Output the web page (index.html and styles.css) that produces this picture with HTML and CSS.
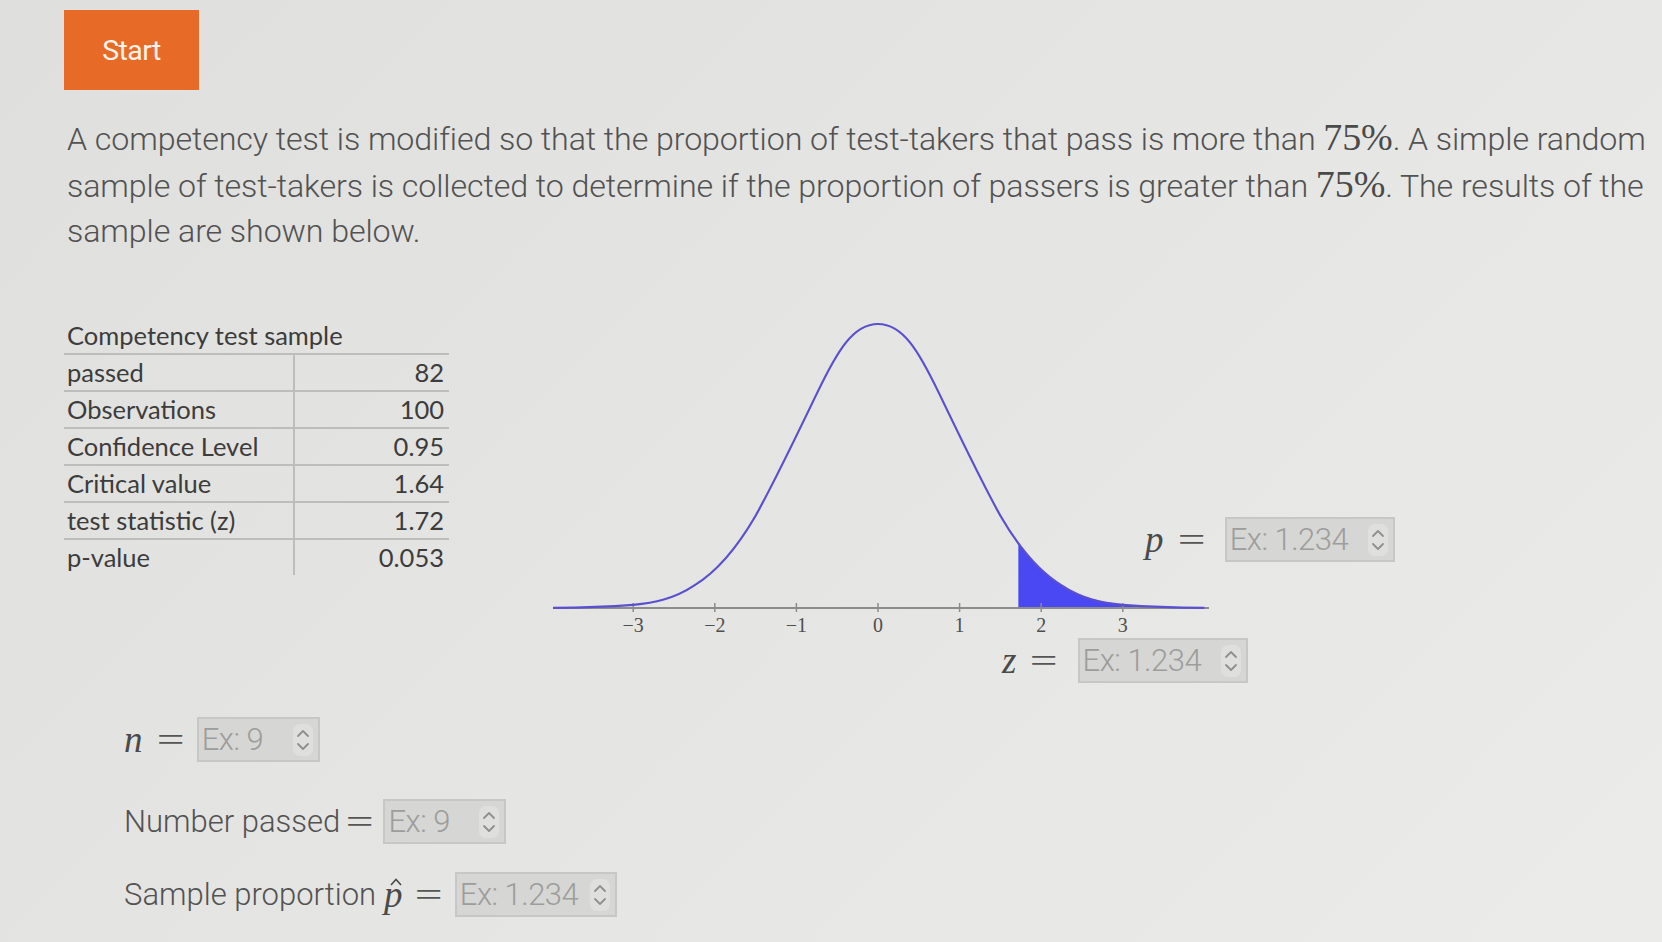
FILE: index.html
```html
<!DOCTYPE html>
<html lang="en">
<head>
<meta charset="utf-8">
<title>Competency test</title>
<link rel="stylesheet" href="styles.css">
</head>
<body>
<div class="page">
  <button class="start">Start</button>

  <p class="problem">A competency test is modified so that the proportion of test-takers that pass is more than <span class="num">75%</span>. A simple random<br>sample of test-takers is collected to determine if the proportion of passers is greater than <span class="num">75%</span>. The results of the<br>sample are shown below.</p>

  <div class="mid">
    <div class="table-block">
      <div class="table-title">Competency test sample</div>
      <table class="data">
        <tr><td class="k">passed</td><td class="v">82</td></tr>
        <tr><td class="k">Observations</td><td class="v">100</td></tr>
        <tr><td class="k">Confidence Level</td><td class="v">0.95</td></tr>
        <tr><td class="k">Critical value</td><td class="v">1.64</td></tr>
        <tr><td class="k">test statistic (z)</td><td class="v">1.72</td></tr>
        <tr><td class="k">p-value</td><td class="v">0.053</td></tr>
      </table>
    </div>

    <div class="chart">
      <svg class="curve" width="656" height="330" viewBox="0 0 656 330">
        <polygon class="tail" points="465.35,297 465.35,232.3 467.8,235.57 478,247.6 488.2,258.57 498.4,267.2 508.6,274.39 518.8,280 529,284.53 539.2,288 549.4,290.52 569.8,293.85 590.2,295.55 610.6,296.38 631,296.75 651.4,296.9 651.4,297"/>
        <line class="axis" x1="0" y1="297" x2="656" y2="297"/>
        <g class="ticks">
          <line x1="80.2" y1="292" x2="80.2" y2="301"/>
          <line x1="161.8" y1="292" x2="161.8" y2="301"/>
          <line x1="243.4" y1="292" x2="243.4" y2="301"/>
          <line x1="325" y1="292" x2="325" y2="301"/>
          <line x1="406.6" y1="292" x2="406.6" y2="301"/>
          <line x1="488.2" y1="292" x2="488.2" y2="301"/>
          <line x1="569.8" y1="292" x2="569.8" y2="301"/>
        </g>
        <path class="line" d="M0,296.9 C40,296.6 60,295.4 80.2,293.85 C100.6,292 121,288 141.4,274.39 C161.8,262 182.2,240 202.6,204.79 C223,168 243.4,124.75 263.8,82.64 C284.2,40 300,13 325,13 C350,13 365.8,40 386.2,82.64 C406.6,124.75 427,168 447.4,204.79 C467.8,240 488.2,262 508.6,274.39 C529,288 549.4,292 569.8,293.85 C590,295.4 610,296.6 651.4,296.9"/>
        <g class="labels">
          <text x="80.2" y="321">−3</text>
          <text x="161.8" y="321">−2</text>
          <text x="243.4" y="321">−1</text>
          <text x="325" y="321">0</text>
          <text x="406.6" y="321">1</text>
          <text x="488.2" y="321">2</text>
          <text x="569.8" y="321">3</text>
        </g>
      </svg>

      <div class="field field-p">
        <span class="mi">p</span><span class="mo">=</span>
        <div class="box box-lg"><span class="ph">Ex: 1.234</span><svg class="spin" width="22" height="34" viewBox="0 0 22 34"><rect x="1" y="1" width="20" height="32" rx="7"/><path d="M6 13 L11 8 L16 13"/><path d="M6 21 L11 26 L16 21"/></svg></div>
      </div>

      <div class="field field-z">
        <span class="mi">z</span><span class="mo">=</span>
        <div class="box box-lg"><span class="ph">Ex: 1.234</span><svg class="spin" width="22" height="34" viewBox="0 0 22 34"><rect x="1" y="1" width="20" height="32" rx="7"/><path d="M6 13 L11 8 L16 13"/><path d="M6 21 L11 26 L16 21"/></svg></div>
      </div>
    </div>
  </div>

  <div class="field row-n">
    <span class="mi">n</span><span class="mo">=</span>
    <div class="box box-sm"><span class="ph">Ex: 9</span><svg class="spin" width="22" height="34" viewBox="0 0 22 34"><rect x="1" y="1" width="20" height="32" rx="7"/><path d="M6 13 L11 8 L16 13"/><path d="M6 21 L11 26 L16 21"/></svg></div>
  </div>

  <div class="field row-passed">
    <span class="txt">Number passed</span><span class="mo">=</span>
    <div class="box box-sm"><span class="ph">Ex: 9</span><svg class="spin" width="22" height="34" viewBox="0 0 22 34"><rect x="1" y="1" width="20" height="32" rx="7"/><path d="M6 13 L11 8 L16 13"/><path d="M6 21 L11 26 L16 21"/></svg></div>
  </div>

  <div class="field row-prop">
    <span class="txt">Sample proportion</span><span class="mi hat">p<svg class="caret" width="12" height="8" viewBox="0 0 12 8"><path d="M1 7 L6 1.5 L11 7"/></svg></span><span class="mo">=</span>
    <div class="box box-md"><span class="ph">Ex: 1.234</span><svg class="spin" width="22" height="34" viewBox="0 0 22 34"><rect x="1" y="1" width="20" height="32" rx="7"/><path d="M6 13 L11 8 L16 13"/><path d="M6 21 L11 26 L16 21"/></svg></div>
  </div>
</div>
</body>
</html>
```

FILE: styles.css
```css
html, body {
  margin: 0;
  padding: 0;
}

body {
  width: 1662px;
  height: 942px;
  overflow: hidden;
  background: linear-gradient(135deg, #dfdfdd 0%, #e5e5e3 50%, #ebebe9 100%);
  font-family: Roboto, "Liberation Sans", sans-serif;
  font-weight: 300;
  color: #4f4f4f;
}

.page {
  padding: 10px 0 0 64px;
}

.start {
  display: block;
  width: 135px;
  height: 80px;
  margin: 0;
  padding: 0;
  border: none;
  background: #e76a27;
  color: #fff3ea;
  font-family: Roboto, "Liberation Sans", sans-serif;
  font-weight: 400;
  font-size: 28.5px;
  letter-spacing: -0.6px;
}

.problem {
  margin: 25px 0 0 3px;
  font-size: 32.2px;
  line-height: 45px;
  white-space: nowrap;
  color: #525252;
  letter-spacing: -0.1px;
}

.num {
  font-family: "Liberation Serif", serif;
  font-weight: 400;
  font-size: 38px;
  color: #4a4a4a;
}

.mid {
  display: flex;
  margin-top: 57px;
}

.table-block {
  width: 385px;
  margin-top: 7px;
  font-family: Lato, "Open Sans", sans-serif;
  font-weight: 400;
  color: #3c3c3c;
  font-size: 25.5px;
}

.table-title {
  height: 35px;
  line-height: 35px;
  padding-left: 3px;
}

.data {
  width: 385px;
  border-collapse: collapse;
  font-size: 25.5px;
}

.data td {
  height: 35px;
  padding: 0;
  border-top: 2px solid #bdbdbb;
  line-height: 35px;
}

.data td.k {
  width: 226px;
  padding-left: 3px;
  border-right: 2px solid #bdbdbb;
}

.data td.v {
  text-align: right;
  padding-right: 5px;
}

.chart {
  display: grid;
  grid-template-columns: 592px 64px auto;
  grid-template-rows: 330px 45px;
  margin-left: 104px;
}

.curve {
  grid-column: 1 / 3;
  grid-row: 1;
  display: block;
}

.curve .axis {
  stroke: #8c8c8c;
  stroke-width: 2;
}

.curve .ticks line {
  stroke: #8c8c8c;
  stroke-width: 1.5;
}

.curve .tail {
  fill: #4a48f2;
}

.curve .line {
  fill: none;
  stroke: #5a50cf;
  stroke-width: 2.2;
  stroke-linejoin: round;
}

.curve .labels text {
  font-family: "Liberation Serif", serif;
  font-size: 20px;
  fill: #4f4f4f;
  text-anchor: middle;
}

.field {
  display: flex;
  align-items: center;
}

.field-p {
  grid-column: 2 / 4;
  grid-row: 1;
  align-self: end;
  margin-bottom: 79px;
}

.field-z {
  grid-column: 1 / -1;
  grid-row: 2;
  padding-left: 449px;
  align-self: start;
  margin-top: -3px;
}

.mi {
  font-family: "Liberation Serif", serif;
  font-style: italic;
  font-weight: 400;
  font-size: 37px;
  color: #4a4a4a;
  line-height: 1;
}

.mo {
  display: inline-block;
  font-family: "Liberation Serif", serif;
  font-weight: 400;
  font-size: 34px;
  color: #555;
  transform: scaleX(1.45);
  margin: 0 20px 0 18px;
  line-height: 1;
}

.field-p .mo,
.field-z .mo {
  margin-right: 24px;
}

.txt {
  font-size: 31px;
  color: #525252;
  margin-right: 2px;
}

.hat {
  position: relative;
  display: inline-block;
  margin-left: 6px;
}

.caret {
  position: absolute;
  left: 6px;
  top: 2px;
}

.caret path {
  fill: none;
  stroke: #4a4a4a;
  stroke-width: 1.6;
  stroke-linejoin: miter;
}

.box {
  display: flex;
  align-items: center;
  box-sizing: border-box;
  height: 45px;
  padding: 0 4px 0 3px;
  background: #d6d6d4;
  border: 2px solid #c7c7c5;
}

.box-sm { width: 123px; }
.box-md { width: 162px; }
.box-lg { width: 170px; }

.ph {
  font-size: 31px;
  color: #9d9d9b;
  letter-spacing: -0.5px;
  white-space: nowrap;
}

.spin {
  margin-left: auto;
  flex: none;
}

.spin rect {
  fill: #dfdfdd;
}

.spin path {
  fill: none;
  stroke: #8f8f8d;
  stroke-width: 1.8;
  stroke-linecap: round;
  stroke-linejoin: round;
}

.row-n {
  margin-top: 31px;
  padding-left: 60px;
}

.row-n .mo { margin-right: 17px; }

.row-passed {
  margin-top: 37px;
  padding-left: 60px;
}

.row-passed .mo { margin: 0 14px 0 8px; }

.row-prop {
  margin-top: 28px;
  padding-left: 60px;
}

.row-prop .mo { margin: 0 17px 0 16px; }
```
